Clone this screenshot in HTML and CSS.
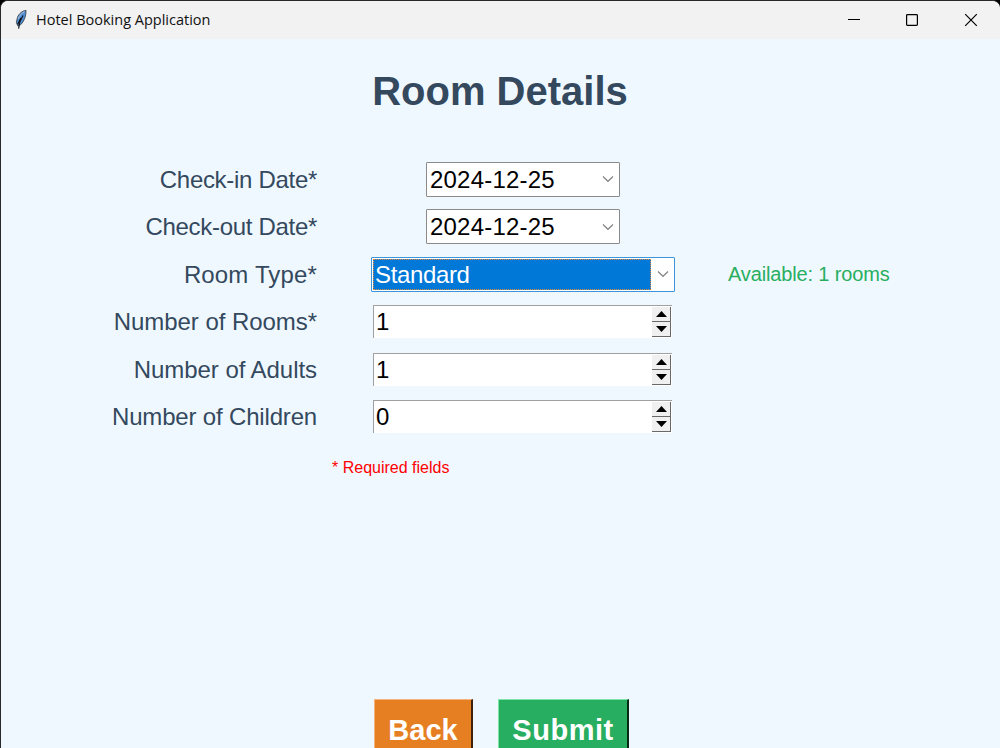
FILE: index.html
```html
<!DOCTYPE html>
<html lang="en">
<head>
<meta charset="utf-8">
<title>Hotel Booking Application</title>
<link rel="stylesheet" href="styles.css">
</head>
<body>
<div class="window">
  <header class="titlebar">
    <svg class="feather" width="14" height="22" viewBox="0 0 14 22">
      <path d="M12 1.4 C8.5 1.6 4.8 4.6 3.4 8.6 L2.4 13.6 L3.9 17 L6.8 15.6 C10 12.4 12.2 7 12 1.4Z" fill="#4f8fd8" stroke="#4a5058" stroke-width="1"/>
      <path d="M10.4 2.8 C7.6 4 5.2 7 4.2 10" fill="none" stroke="#a9bfd8" stroke-width="1"/>
      <path d="M9 6.5 L5.8 13 L4.6 19.6 M6.8 9 L3.6 15.5" fill="none" stroke="#10161e" stroke-width="1.2"/>
    </svg>
    <span class="caption">Hotel Booking Application</span>
    <div class="controls">
      <svg width="59" height="38" viewBox="0 0 59 38"><path d="M23 18.5H35" stroke="#000" fill="none"/></svg>
      <svg width="58" height="38" viewBox="0 0 58 38"><rect x="22.6" y="13.6" width="10.8" height="10.8" rx=".8" stroke="#000" stroke-width="1.2" fill="none"/></svg>
      <svg width="58" height="38" viewBox="0 0 58 38"><path d="M23.2 13.2L34.8 24.8M34.8 13.2L23.2 24.8" stroke="#000" stroke-width="1.2" fill="none"/></svg>
    </div>
  </header>
  <main class="content">
    <h1 class="heading">Room Details</h1>
    <form class="form">
      <label class="label">Check-in Date*</label>
      <div class="field"><div class="combo date"><span class="digits">2024-12-25</span><svg class="chevron" width="12" height="8" viewBox="0 0 12 8"><path d="M1 1.5L6 6.3L11 1.5"/></svg></div></div>
      <span></span>
      <label class="label">Check-out Date*</label>
      <div class="field"><div class="combo date"><span class="digits">2024-12-25</span><svg class="chevron" width="12" height="8" viewBox="0 0 12 8"><path d="M1 1.5L6 6.3L11 1.5"/></svg></div></div>
      <span></span>
      <label class="label type">Room Type*</label>
      <div class="field"><div class="combo room"><span class="selected">Standard</span><svg class="chevron" width="12" height="8" viewBox="0 0 12 8"><path d="M1 1.5L6 6.3L11 1.5"/></svg></div></div>
      <span class="available">Available: 1 rooms</span>
      <label class="label wide">Number of Rooms*</label>
      <div class="field"><div class="spin"><span>1</span><div class="arrows"><i class="step"><svg width="11" height="6"><path d="M0 6L5.5 0L11 6Z"/></svg></i><i class="step"><svg width="11" height="6"><path d="M0 0L5.5 6L11 0Z"/></svg></i></div></div></div>
      <span></span>
      <label class="label wide">Number of Adults</label>
      <div class="field"><div class="spin"><span>1</span><div class="arrows"><i class="step"><svg width="11" height="6"><path d="M0 6L5.5 0L11 6Z"/></svg></i><i class="step"><svg width="11" height="6"><path d="M0 0L5.5 6L11 0Z"/></svg></i></div></div></div>
      <span></span>
      <label class="label children">Number of Children</label>
      <div class="field"><div class="spin"><span>0</span><div class="arrows"><i class="step"><svg width="11" height="6"><path d="M0 6L5.5 0L11 6Z"/></svg></i><i class="step"><svg width="11" height="6"><path d="M0 0L5.5 6L11 0Z"/></svg></i></div></div></div>
      <span></span>
    </form>
    <p class="required">* Required fields</p>
    <div class="actions">
      <button class="button back">Back</button>
      <button class="button submit">Submit</button>
    </div>
  </main>
</div>
</body>
</html>
```
FILE: styles.css
```css
* { box-sizing: border-box; }
body { margin: 0; background: #000; font-family: "Liberation Sans", Arial, sans-serif; overflow: hidden; }
svg { display: block; flex: none; }
.window { height: 748px; display: flex; flex-direction: column; border: solid #2b282b; border-width: 1px 0 0 1px; border-radius: 8px 8px 0 0; background: #f0f8ff; overflow: hidden; }
.titlebar { flex: none; height: 38px; display: flex; align-items: center; padding-left: 13px; background: #f2f2f2; }
.caption { margin-left: 8px; font-family: "Open Sans", "Noto Sans", sans-serif; font-size: 14.5px; line-height: 38px; color: #111; white-space: nowrap; }
.controls { display: flex; margin-left: auto; }
.content { flex: 1; min-height: 0; display: flex; flex-direction: column; overflow: hidden; }
.heading { margin: 27px 0 0; text-align: center; padding-right: 1px; font-size: 40px; line-height: 50px; color: #34495e; }
.form { display: grid; grid-template-columns: 316px 54px 304px 1fr; grid-auto-rows: 47.5px; align-items: center; margin-top: 39.4px; }
.label { grid-column: 1; text-align: right; font-size: 24px; line-height: 32px; letter-spacing: -.3px; padding-top: 1px; color: #34495e; white-space: nowrap; }
.wide { letter-spacing: -.05px; }
.type { letter-spacing: .15px; }
.children { letter-spacing: -.17px; }
.field { grid-column: 3; display: flex; justify-content: center; }
.combo { display: flex; align-items: center; justify-content: space-between; height: 35px; background: #fff; border: 1px solid #8b8b8b; border-radius: 1px; font-size: 24px; line-height: 31px; color: #000; }
.date { width: 194px; padding: 0 5px 0 3px; }
.digits { letter-spacing: .2px; }
.chevron path { fill: none; stroke: #858585; stroke-width: 1.2; }
.room { width: 304px; padding: 0 5px 0 1px; border-color: #3c94dc; }
.selected { width: 278px; height: 31px; padding-left: 1px; background: #0078d7; color: #fff; border: 1px dotted #e58b3e; line-height: 29px; letter-spacing: -.35px; }
.available { padding: 1px 0 0 53px; font-size: 20px; letter-spacing: -.14px; color: #27ae60; white-space: nowrap; }
.spin { display: flex; justify-content: space-between; width: 299px; height: 33px; margin-right: 1px; padding: 1px 1px 0 2px; background: #fff; border: solid #a0a0a0; border-width: 1px 0 0 1px; font-size: 24px; line-height: 30px; color: #000; }
.arrows { width: 19px; height: 30px; display: flex; flex-direction: column; }
.step { flex: 1; display: flex; align-items: center; justify-content: center; background: #f0f0f0; border-right: 1px solid #696969; border-bottom: 1px solid #696969; }
.required { margin: 17.6px 0 0 331px; font-size: 16px; line-height: 20px; color: #f00; }
.actions { display: flex; gap: 25px; margin: 221px 0 0 373px; }
.button { flex: none; height: 64px; padding: 0; border: 1px solid; border-right-width: 2px; font: bold 29px/61px "Liberation Sans", Arial, sans-serif; color: #fff; }
.back { width: 99px; background: #e67e22; border-color: #f5b27b #3d210b #3d210b #f5b27b; }
.submit { width: 131px; background: #27ae60; border-color: #7de5a7 #062c16 #062c16 #7de5a7; letter-spacing: .5px; }
```
